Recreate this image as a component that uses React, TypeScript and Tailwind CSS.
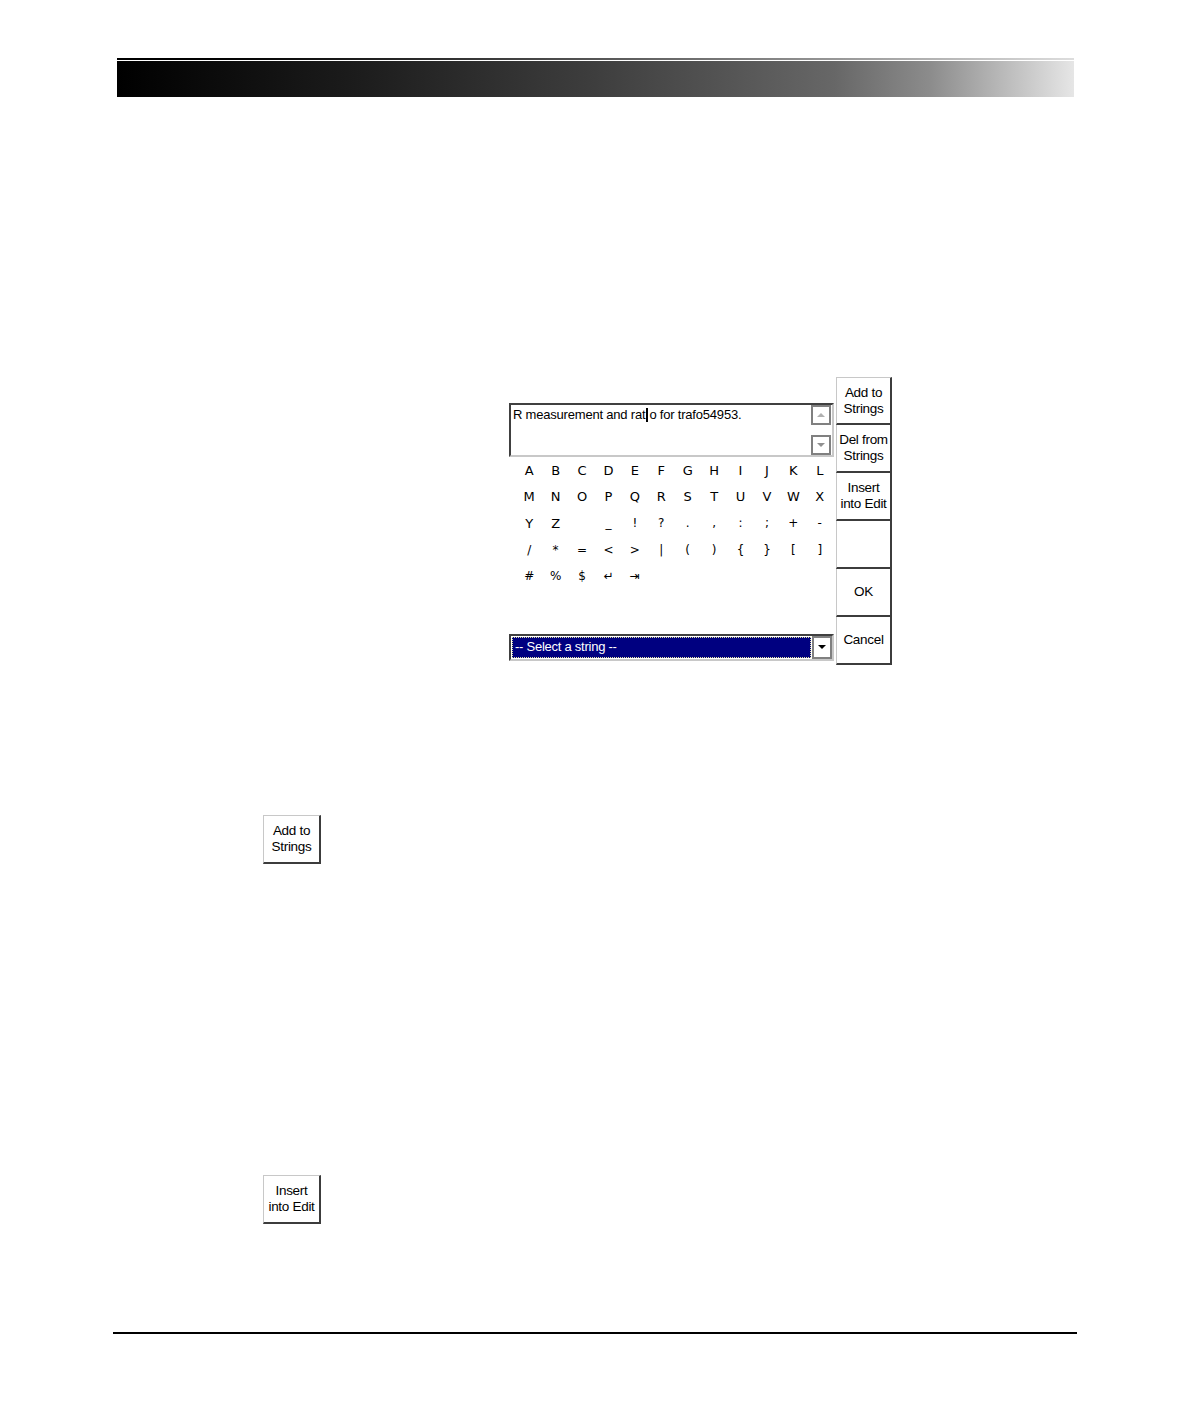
import React from 'react';

const font = { fontFamily: '"Liberation Sans", Arial, sans-serif' };

const rows: string[][] = [
  ['A', 'B', 'C', 'D', 'E', 'F', 'G', 'H', 'I', 'J', 'K', 'L'],
  ['M', 'N', 'O', 'P', 'Q', 'R', 'S', 'T', 'U', 'V', 'W', 'X'],
  ['Y', 'Z', ' ', '_', '!', '?', '.', ',', ':', ';', '+', '-'],
  ['/', '*', '=', '<', '>', '|', '(', ')', '{', '}', '[', ']'],
  ['#', '%', '$', '↵', '⇥'],
];

const sideButtons = [
  ['Add to', 'Strings'],
  ['Del from', 'Strings'],
  ['Insert', 'into Edit'],
  [],
  ['OK'],
  ['Cancel'],
];

function SideButton({ lines, first }: { lines: string[]; first?: boolean }) {
  return (
    <div
      className={`flex h-[48px] w-[56px] flex-col items-center justify-center border-l border-r-2 border-b-2 border-l-[#c8c8c8] border-r-[#3c3c3c] border-b-[#3c3c3c] bg-white text-[13.5px] leading-[16px] tracking-[-0.3px] text-black ${
        first ? 'border-t border-t-[#c8c8c8]' : ''
      }`}
    >
      {lines.map((l) => (
        <span key={l}>{l}</span>
      ))}
    </div>
  );
}

function ScrollArrow({ up }: { up?: boolean }) {
  return (
    <div className="flex h-[20px] w-[20px] items-center justify-center border-2 border-[#808080] bg-white">
      <svg width="10" height="6" viewBox="0 0 10 6">
        {up ? (
          <polygon points="1,5 9,5 5,1" fill="#b0b0b0" />
        ) : (
          <polygon points="1,1 9,1 5,5" fill="#909090" />
        )}
      </svg>
    </div>
  );
}

function StandaloneButton({ lines }: { lines: string[] }) {
  return (
    <div className="ml-[263px] flex h-[49px] w-[58px] flex-col items-center justify-center border border-t-[#c8c8c8] border-l-[#c8c8c8] border-r-2 border-b-2 border-r-[#3c3c3c] border-b-[#3c3c3c] bg-white text-[13.5px] leading-[16px] tracking-[-0.3px] text-black">
      {lines.map((l) => (
        <span key={l}>{l}</span>
      ))}
    </div>
  );
}

export default function App() {
  return (
    <div className="relative min-h-[1418px] w-[1190px] bg-white pt-[58px]" style={font}>
      {/* Header rule and gradient band */}
      <div className="ml-[117px] h-[2px] w-[957px] bg-gradient-to-r from-[#000] via-[#555] to-[#ddd]" />
      <div className="ml-[117px] mt-px h-[36px] w-[957px] bg-[linear-gradient(to_right,#000_0%,#1c1c1c_25%,#3e3e3e_50%,#676767_75%,#8c8c8c_85%,#e6e6e6_100%)]" />

      {/* Dialog */}
      <div className="ml-[509px] mt-[280px] flex w-[383px]">
        <div className="w-[327px] pt-[26px]">
          <div className="flex h-[54px] w-[325px] border-2 border-t-[#404040] border-l-[#404040] border-b-[#c8c8c8] border-r-[#c8c8c8] bg-white">
            <div className="flex-1 pl-[2px] pt-[2px] text-[13px] leading-[16px] tracking-[-0.2px] text-black">
              R measurement and rat
              <span className="relative inline-block w-[4px] align-top">
                <span className="absolute left-[1px] top-[1px] h-[14px] w-[2px] bg-black" />
              </span>
              o for trafo54953.
            </div>
            <div className="flex flex-col justify-between pr-[1px]">
              <ScrollArrow up />
              <ScrollArrow />
            </div>
          </div>

          <div className="ml-[7px] grid w-[317px] grid-cols-12">
            {rows.flat().map((c, i) => (
              <div
                key={i}
                className="flex h-[26.5px] items-center justify-center text-[13px] text-black"
                style={{ fontFamily: '"DejaVu Sans", "Liberation Sans", sans-serif', fontSize: /[A-Z]/.test(c) ? 13 : 12 }}
              >
                {c}
              </div>
            ))}
          </div>

          <div className="mt-[44px] flex h-[27px] w-[325px] border-2 border-t-[#404040] border-l-[#404040] border-b-[#c8c8c8] border-r-[#c8c8c8] bg-white">
            <div className="m-[1px] flex flex-1 items-center border border-dotted border-[#e0e0a0] bg-[#000080] pl-[2px] text-[13px] tracking-[-0.25px] text-white">
              -- Select a string --
            </div>
            <div className="flex w-[20px] items-center justify-center border-2 border-[#808080] bg-white">
              <svg width="10" height="6" viewBox="0 0 10 6">
                <polygon points="1,1 9,1 5,5" fill="#000" />
              </svg>
            </div>
          </div>
        </div>

        <div className="flex flex-col">
          {sideButtons.map((b, i) => (
            <SideButton key={i} lines={b} first={i === 0} />
          ))}
        </div>
      </div>

      <div className="mt-[150px]">
        <StandaloneButton lines={['Add to', 'Strings']} />
      </div>

      <div className="mt-[311px]">
        <StandaloneButton lines={['Insert', 'into Edit']} />
      </div>

      {/* Footer rule */}
      <div className="ml-[113px] mt-[108px] h-[2px] w-[964px] bg-black" />
    </div>
  );
}
